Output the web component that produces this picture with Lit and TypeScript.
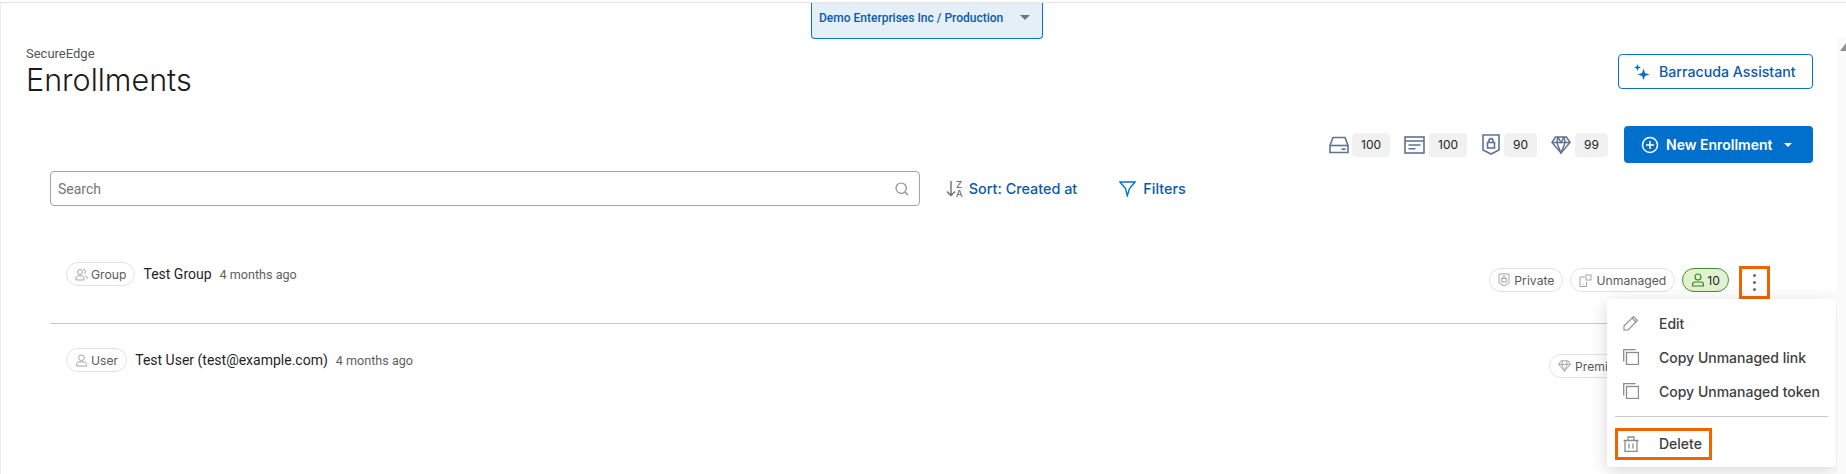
import { LitElement, css, html } from "lit";
import { customElement } from "lit/decorators.js";

const icons = {
  inbox: html`<svg width="20" height="18" viewBox="0 0 20 18" fill="none" stroke="#5f7291" stroke-width="1.6"><path d="M1 9.5 4 1.5h12l3 8v7H1z" /><path d="M1 9.5h18" /><path d="M12.5 13.2h4" stroke-width="1.8" /></svg>`,
  list: html`<svg width="21" height="18" viewBox="0 0 21 18" fill="none" stroke="#5f7291" stroke-width="1.6"><rect x="1" y="1" width="19" height="16" /><path d="M1 5h19M4.5 9h12M4.5 12.8h7" /></svg>`,
  shield: html`<svg width="18" height="21" viewBox="0 0 18 21" fill="none" stroke="#5f7291" stroke-width="1.6"><path d="M1 1h16v15l-8 4-8-4z" /><rect x="5.5" y="8.5" width="7" height="5.5" /><path d="M7 8.5V6.6a2 2 0 0 1 4 0v1.9" /></svg>`,
  gem: html`<svg width="20" height="18" viewBox="0 0 20 18" fill="none" stroke="#5f7291" stroke-width="1.5"><path d="M4.5 1h11L19 6.5 10 17 1 6.5z" /><path d="M1 6.5h18M7 1 5.8 6.5 10 17l4.200-10.500L13 1M7 1l3 5.500L13 1" /></svg>`,
  plus: html`<svg width="18" height="18" viewBox="0 0 18 18" fill="none" stroke="#fff" stroke-width="1.5"><circle cx="9" cy="9" r="7.5" /><path d="M9 5v8M5 9h8" /></svg>`,
  sparkle: html`<svg width="16" height="16" viewBox="0 0 16 16" fill="#0a6fc4"><path d="M9.500 4.500 11 9 15.500 10.500 11 12 9.500 16 8 12 3.500 10.500 8 9z" /><path d="M3.500 0 4.400 2.600 7 3.500 4.400 4.400 3.500 7 2.600 4.400 0 3.500 2.600 2.600z" /></svg>`,
  search: html`<svg width="14" height="14" viewBox="0 0 14 14" fill="none" stroke="#8b8b8b" stroke-width="1.2"><circle cx="6.2" cy="6.2" r="5.2" /><path d="m10 10 3 3" /></svg>`,
  sort: html`<svg width="10" height="17" viewBox="0 0 10 17" fill="none" stroke="#6d6d6d" stroke-width="1.4"><path d="M5 1v14M1 11.5 5 15.5l4-4" /></svg>`,
  filter: html`<svg width="17" height="16" viewBox="0 0 17 16" fill="none" stroke="#0a72c8" stroke-width="1.4"><path d="M1 1h15l-5.5 6.5-2.200 7.300-1.800-7.300z" /></svg>`,
  group: html`<svg width="13" height="13" viewBox="0 0 13 13" fill="none" stroke="#a3a3a3" stroke-width="1"><circle cx="5" cy="4" r="2.500" /><path d="M1 12V10c0-1.400 1-2.200 2.400-2.200h3.200C8 7.800 9 8.600 9 10v2z" /><path d="M8 1.200a2.400 2.400 0 0 1 1 4.600M10 7.800c1.200.2 2.200 1 2.200 2.200v1" /></svg>`,
  user: html`<svg width="13" height="13" viewBox="0 0 13 13" fill="none" stroke="#a3a3a3" stroke-width="1"><circle cx="6.500" cy="3.800" r="2.800" /><path d="M1.500 12v-1.500c0-1.500 1.200-2.500 2.500-2.500h5c1.300 0 2.500 1 2.500 2.500V12z" /></svg>`,
  lockSmall: html`<svg width="12" height="14" viewBox="0 0 12 14" fill="none" stroke="#a3a3a3" stroke-width="1"><path d="M1 1h10v9l-5 3-5-3z" /><rect x="3.700" y="5.500" width="4.600" height="3.500" /><path d="M4.700 5.500V4.300a1.300 1.300 0 0 1 2.600 0v1.200" /></svg>`,
  device: html`<svg width="13" height="13" viewBox="0 0 13 13" fill="none" stroke="#a3a3a3" stroke-width="1"><path d="M6 3H1v9.500h6.500V8" /><rect x="7" y="1" width="5" height="5" /><path d="M3.500 10.500h1" /></svg>`,
  userGreen: html`<svg width="14" height="14" viewBox="0 0 14 14" fill="none" stroke="#3f7f1e" stroke-width="1.100"><circle cx="7" cy="4" r="3" /><path d="M1.500 13v-1.500C1.500 10 2.800 9 4.200 9h5.600c1.400 0 2.700 1 2.700 2.500V13z" /></svg>`,
  gemSmall: html`<svg width="13" height="12" viewBox="0 0 20 18" fill="none" stroke="#a3a3a3" stroke-width="1.500"><path d="M4.500 1h11L19 6.500 10 17 1 6.500z" /><path d="M1 6.500h18M7 1 5.800 6.500 10 17l4.200-10.500L13 1" /></svg>`,
  pencil: html`<svg width="16" height="16" viewBox="0 0 16 16" fill="none" stroke="#8c8c8c" stroke-width="1.100"><path d="M1 15V11L10.500 1.500 14.500 5.500 5 15z" /><path d="m9 3 4 4" /></svg>`,
  copy: html`<svg width="16" height="16" viewBox="0 0 16 16" fill="none" stroke="#8c8c8c" stroke-width="1.300"><rect x="3.500" y="3.500" width="12" height="12" /><path d="M.7 12.500V.7h11.800" /></svg>`,
  trash: html`<svg width="16" height="16" viewBox="0 0 16 16" fill="none" stroke="#8c8c8c" stroke-width="1.300"><path d="M2 4.500V15.500h12V4.500M.5 4.500h15M5 4.500V1h6v3.500M6 7.500v5M10 7.500v5" /></svg>`,
};

@customElement("app-root")
export class AppRoot extends LitElement {
  static styles = css`
    :host {
      display: block;
      position: relative;
      width: 1846px;
      height: 474px;
      overflow: hidden;
      background: #fff;
      font-family: Inter, "Liberation Sans", sans-serif;
      color: #1d1d1d;
    }

    .shell {
      height: 100%;
      box-sizing: border-box;
      margin-top: 2px;
      border-top: 1px solid #e4e4e4;
      border-left: 1px solid #ececec;
      padding: 0 33px 0 25px;
    }

    .context-wrap {
      display: flex;
      height: 36px;
      padding-left: 785px;
    }

    .context {
      display: flex;
      align-items: center;
      justify-content: space-between;
      box-sizing: border-box;
      width: 232px;
      height: 36px;
      padding: 0 12px 6px 7px;
      border: 1.5px solid #0a72c8;
      border-top: 0;
      border-radius: 0 0 4px 4px;
      background: #e4eff8;
      color: #0d5aa7;
      font: 500 12px Roboto, sans-serif;
    }

    .caret {
      width: 0;
      height: 0;
      border-left: 5px solid transparent;
      border-right: 5px solid transparent;
      border-top: 5px solid #6f7480;
    }

    .header {
      display: flex;
      justify-content: space-between;
      align-items: flex-start;
      margin-top: 7px;
    }

    .crumb {
      font: 400 13px/16px Roboto, sans-serif;
      color: #555;
    }

    h1 {
      margin: 0;
      font: 300 30.500px/36px Inter, sans-serif;
      color: #1b1b1b;
    }

    .assistant {
      display: flex;
      align-items: center;
      gap: 9px;
      box-sizing: border-box;
      width: 195px;
      height: 35px;
      margin-top: 8px;
      padding-left: 15px;
      border: 1px solid #0a72c8;
      border-radius: 4px;
      color: #0d5aa7;
      font-size: 14.200px;
      font-weight: 500;
    }

    .usage {
      display: flex;
      justify-content: flex-end;
      align-items: center;
      height: 37px;
      margin-top: 28px;
    }

    .counter {
      display: flex;
      align-items: center;
      gap: 4px;
      margin-right: 15px;
    }

    .counter:nth-child(1) {
      gap: 3px;
      margin-right: 14px;
    }

    .counter:nth-child(3) {
      margin-right: 14px;
    }

    .counter:nth-child(4) {
      margin-right: 16px;
    }

    .count {
      display: flex;
      align-items: center;
      justify-content: center;
      box-sizing: border-box;
      height: 24px;
      padding: 0 9px;
      min-width: 30px;
      border-radius: 4px;
      background: #f1f1f1;
      font: 400 12px Inter, sans-serif;
      color: #222;
    }

    .new {
      display: flex;
      align-items: center;
      box-sizing: border-box;
      width: 189px;
      height: 37px;
      padding-left: 17px;
      border-radius: 4px;
      background: #0070cc;
      color: #fff;
      font-size: 14px;
      font-weight: 600;
    }

    .new span {
      margin: 0 11px 0 7px;
    }

    .new i {
      width: 0;
      height: 0;
      border-left: 4.500px solid transparent;
      border-right: 4.500px solid transparent;
      border-top: 4.500px solid #fff;
    }

    .tools {
      display: flex;
      align-items: center;
      height: 35px;
      margin: 8px 0 0 24px;
    }

    .search {
      display: flex;
      align-items: center;
      justify-content: space-between;
      box-sizing: border-box;
      width: 870px;
      height: 35px;
      padding: 0 10px 0 7px;
      border: 1px solid #a3a3a3;
      border-radius: 4px;
      color: #757575;
      font: 400 14px Roboto, sans-serif;
    }

    .tool {
      display: flex;
      align-items: center;
      color: #0d5aa7;
      font-size: 14.400px;
      font-weight: 500;
    }

    .sort {
      margin-left: 26px;
    }

    .az {
      display: flex;
      flex-direction: column;
      margin: 0 6px 0 0;
      color: #6d6d6d;
      font: 500 9.500px/9px Inter, sans-serif;
    }

    .filters {
      margin-left: 42px;
      gap: 7px;
    }

    .list {
      margin: 56px 0 0 24px;
    }

    .row {
      display: flex;
      justify-content: space-between;
      box-sizing: border-box;
      padding: 0 43px 0 16px;
      height: 61px;
    }

    .row + .row {
      height: 80px;
      padding-top: 24px;
      border-top: 1px solid #c9c9c9;
    }

    .left {
      display: flex;
      align-items: center;
      height: 24px;
      gap: 8px;
    }

    .chip {
      display: inline-flex;
      align-items: center;
      gap: 4px;
      box-sizing: border-box;
      height: 24px;
      padding: 0 8px;
      border: 1px solid #e2e2e2;
      border-radius: 12px;
      color: #5a5a5a;
      font: 400 12.200px Inter, sans-serif;
      white-space: nowrap;
    }

    .left .chip {
      gap: 3px;
    }

    .name {
      font: 400 14px Roboto, sans-serif;
      color: #1f1f1f;
    }

    .ago {
      font: 400 12.600px Roboto, sans-serif;
      color: #5f5f5f;
    }

    .right {
      display: flex;
      align-items: flex-start;
      gap: 7px;
      padding-top: 6px;
    }

    .chip.green {
      gap: 2px;
      border-color: #4d8b2a;
      background: #dff3cf;
      color: #1f1f1f;
    }

    .kebab {
      display: flex;
      flex-direction: column;
      align-items: center;
      justify-content: center;
      gap: 3.500px;
      box-sizing: border-box;
      width: 31px;
      height: 33px;
      margin: -2px 0 0 3px;
      border: 3px solid #f06400;
    }

    .kebab i {
      width: 3.500px;
      height: 3.500px;
      border-radius: 50%;
      background: #666;
    }

    .premium {
      margin-right: 131px;
      width: 90px;
    }

    .menu {
      position: absolute;
      left: 1607px;
      top: 299px;
      box-sizing: border-box;
      width: 229px;
      height: 168px;
      padding: 7px 8px;
      border-radius: 4px;
      background: #fff;
      box-shadow: 0 4px 18px rgba(0, 0, 0, 0.16);
      font-size: 14px;
      font-weight: 500;
      color: #3e3e3e;
    }

    .item {
      display: flex;
      align-items: center;
      gap: 20px;
      height: 34px;
      padding-left: 8px;
    }

    .menu hr {
      margin: 8px 0 11px;
      border: 0;
      border-top: 1px solid #c9c9c9;
    }

    .item.delete {
      box-sizing: border-box;
      width: 97px;
      height: 32px;
      padding: 0 0 1px 5px;
      border: 3px solid #f06400;
    }

    .scroll-track {
      position: absolute;
      right: 0;
      top: 38px;
      display: flex;
      justify-content: flex-end;
      box-sizing: border-box;
      width: 9px;
      height: 436px;
      padding-top: 5px;
      background: #fbfbfb;
    }

    .scroll-track i {
      width: 0;
      height: 0;
      border-left: 6px solid transparent;
      border-bottom: 8px solid #8f8f8f;
    }
  `;

  render() {
    return html`
      <div class="shell">
        <div class="context-wrap">
          <div class="context">Demo Enterprises Inc / Production <span class="caret"></span></div>
        </div>

        <div class="header">
          <div>
            <div class="crumb">SecureEdge</div>
            <h1>Enrollments</h1>
          </div>
          <div class="assistant">${icons.sparkle}Barracuda Assistant</div>
        </div>

        <div class="usage">
          <div class="counter">${icons.inbox}<span class="count">100</span></div>
          <div class="counter">${icons.list}<span class="count">100</span></div>
          <div class="counter">${icons.shield}<span class="count">90</span></div>
          <div class="counter">${icons.gem}<span class="count">99</span></div>
          <div class="new">${icons.plus}<span>New Enrollment</span><i></i></div>
        </div>

        <div class="tools">
          <div class="search">Search ${icons.search}</div>
          <div class="tool sort">
            ${icons.sort}
            <div class="az"><span>Z</span><span>A</span></div>
            Sort: Created at
          </div>
          <div class="tool filters">${icons.filter}Filters</div>
        </div>

        <div class="list">
          <div class="row">
            <div class="left">
              <span class="chip">${icons.group}Group</span>
              <span class="name">Test Group</span>
              <span class="ago">4 months ago</span>
            </div>
            <div class="right">
              <span class="chip">${icons.lockSmall}Private</span>
              <span class="chip">${icons.device}Unmanaged</span>
              <span class="chip green">${icons.userGreen}10</span>
              <div class="kebab"><i></i><i></i><i></i></div>
            </div>
          </div>
          <div class="row">
            <div class="left">
              <span class="chip">${icons.user}User</span>
              <span class="name">Test User (test@example.com)</span>
              <span class="ago">4 months ago</span>
            </div>
            <div class="right">
              <span class="chip premium">${icons.gemSmall}Premium</span>
            </div>
          </div>
        </div>
      </div>

      <div class="menu">
        <div class="item">${icons.pencil}Edit</div>
        <div class="item">${icons.copy}Copy Unmanaged link</div>
        <div class="item">${icons.copy}Copy Unmanaged token</div>
        <hr />
        <div class="item delete">${icons.trash}Delete</div>
      </div>
      <div class="scroll-track"><i></i></div>
    `;
  }
}
